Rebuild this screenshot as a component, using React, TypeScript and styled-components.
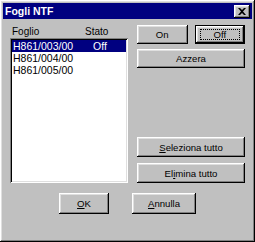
import { ReactElement } from 'react';
import styled, { createGlobalStyle, css } from 'styled-components';

const GlobalStyle = createGlobalStyle`
  html, body {
    margin: 0;
    padding: 0;
    background: #c0c0c0;
  }
  body {
    font-family: 'Liberation Sans', Arial, sans-serif;
  }
`;

const raised = css`
  box-shadow:
    inset -1px -1px #000,
    inset 1px 1px #fff,
    inset -2px -2px #808080,
    inset 2px 2px #dfdfdf;
`;

const sunken = css`
  box-shadow:
    inset 1px 1px #808080,
    inset -1px -1px #fff,
    inset 2px 2px #000,
    inset -2px -2px #dfdfdf;
`;

const rows = [
  { sheet: 'H861/003/00', state: 'Off' },
  { sheet: 'H861/004/00', state: '' },
  { sheet: 'H861/005/00', state: '' },
];

function App(): ReactElement {
  return (
    <>
      <GlobalStyle />
      <Window>
        <TitleBar>
          <span>Fogli NTF</span>
          <CloseButton aria-label="Chiudi">
            <svg width="8" height="7" viewBox="0 0 8 7">
              <path
                d="M0 0h2l2 2 2-2h2L5 3.5 8 7H6L4 5 2 7H0l3-3.5z"
                fill="#000"
              />
            </svg>
          </CloseButton>
        </TitleBar>
        <Body>
          <LeftColumn>
            <Headers>
              <HeaderCell $width={73}>Foglio</HeaderCell>
              <HeaderCell>Stato</HeaderCell>
            </Headers>
            <ListBox>
              {rows.map((r, i) => (
                <ListRow key={r.sheet} $selected={i === 0}>
                  <Cell $width={80}>{r.sheet}</Cell>
                  <Cell>{r.state}</Cell>
                </ListRow>
              ))}
            </ListBox>
          </LeftColumn>
          <RightColumn>
            <ButtonGroup>
              <PairRow>
                <Button $grow>On</Button>
                <Button $grow $default>
                  <FocusRect>Off</FocusRect>
                </Button>
              </PairRow>
              <Button>Azzera</Button>
            </ButtonGroup>
            <ButtonGroup $bottom>
              <Button $tall>
                <u>S</u>eleziona tutto
              </Button>
              <Button $tall>
                El<u>i</u>mina tutto
              </Button>
            </ButtonGroup>
          </RightColumn>
        </Body>
        <Footer>
          <Button $width={50} $footer>
            <u>O</u>K
          </Button>
          <Button $width={64} $footer>
            <u>A</u>nnulla
          </Button>
        </Footer>
      </Window>
    </>
  );
}

const Window = styled.div`
  width: 255px;
  height: 242px;
  box-sizing: border-box;
  padding: 3px;
  background: #c0c0c0;
  display: flex;
  flex-direction: column;
  ${raised}
`;

const TitleBar = styled.div`
  height: 16px;
  background: #000080;
  color: #fff;
  font-weight: bold;
  font-size: 10.5px;
  display: flex;
  align-items: center;
  justify-content: space-between;
  padding: 0 2px 0 2px;
`;

const CloseButton = styled.div`
  width: 16px;
  height: 13px;
  background: #c0c0c0;
  display: flex;
  align-items: center;
  justify-content: center;
  ${raised}
`;

const Body = styled.div`
  display: grid;
  grid-template-columns: 118px 108px;
  column-gap: 9px;
  padding: 0 7px;
`;

const LeftColumn = styled.div`
  display: flex;
  flex-direction: column;
`;

const Headers = styled.div`
  display: flex;
  height: 14px;
  margin-top: 5px;
  padding-left: 2px;
  align-items: center;
  font-size: 10px;
  color: #000;
`;

const HeaderCell = styled.span<{ $width?: number }>`
  width: ${({ $width }) => ($width ? `${$width}px` : 'auto')};
`;

const ListBox = styled.div`
  height: 145px;
  box-sizing: border-box;
  padding: 2px;
  background: #fff;
  ${sunken}
`;

const ListRow = styled.div<{ $selected?: boolean }>`
  height: 12px;
  display: flex;
  align-items: center;
  padding-left: 1px;
  font-size: 10.5px;
  color: ${({ $selected }) => ($selected ? '#fff' : '#000')};
  background: ${({ $selected }) => ($selected ? '#000080' : 'transparent')};
`;

const Cell = styled.span<{ $width?: number }>`
  width: ${({ $width }) => ($width ? `${$width}px` : 'auto')};
  white-space: nowrap;
`;

const RightColumn = styled.div`
  display: flex;
  flex-direction: column;
  justify-content: space-between;
  padding-top: 6px;
`;

const ButtonGroup = styled.div<{ $bottom?: boolean }>`
  display: flex;
  flex-direction: column;
  gap: ${({ $bottom }) => ($bottom ? 6 : 5)}px;
`;

const PairRow = styled.div`
  display: flex;
  gap: 7px;
`;

const Button = styled.div<{
  $default?: boolean;
  $tall?: boolean;
  $grow?: boolean;
  $width?: number;
  $footer?: boolean;
}>`
  flex: ${({ $grow }) => ($grow ? '1 1 0' : 'none')};
  width: ${({ $width }) => ($width ? `${$width}px` : 'auto')};
  height: ${({ $tall, $footer }) => ($footer ? 21 : $tall ? 20 : 19)}px;
  box-sizing: border-box;
  display: flex;
  align-items: center;
  justify-content: center;
  background: #c0c0c0;
  color: #000;
  font-size: 9.6px;
  ${({ $default }) =>
    $default
      ? css`
          box-shadow:
            inset 0 0 0 1px #000,
            inset -2px -2px #000,
            inset 2px 2px #fff,
            inset -3px -3px #808080,
            inset 3px 3px #dfdfdf;
        `
      : raised}
`;

const FocusRect = styled.span`
  display: flex;
  align-items: center;
  justify-content: center;
  width: calc(100% - 10px);
  height: calc(100% - 8px);
  border: 1px dotted #000;
  box-sizing: border-box;
`;

const Footer = styled.div`
  display: flex;
  justify-content: center;
  gap: 23px;
  margin-top: 10px;
`;

export default App;
